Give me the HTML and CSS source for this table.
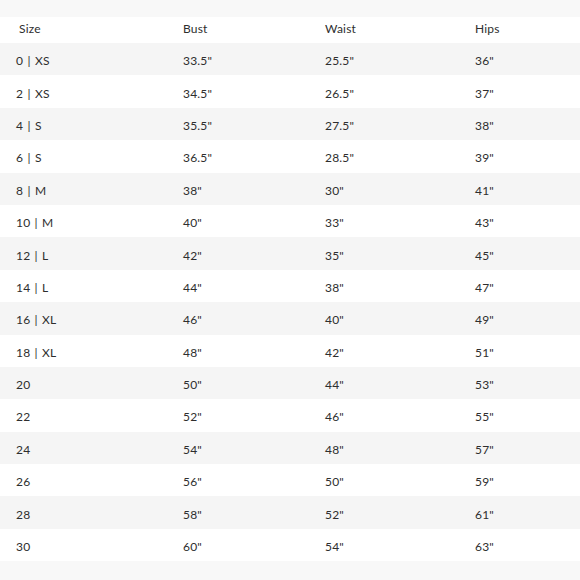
FILE: index.html
```html
<!DOCTYPE html>
<html>
<head>
<meta charset="utf-8">
<link rel="stylesheet" href="styles.css">
</head>
<body>
<div class="chart">
  <div class="band"></div>
  <div class="row head"><span class="first">Size</span><span>Bust</span><span>Waist</span><span>Hips</span></div>
  <div class="row alt"><span>0 | XS</span><span>33.5"</span><span>25.5"</span><span>36"</span></div>
  <div class="row"><span>2 | XS</span><span>34.5"</span><span>26.5"</span><span>37"</span></div>
  <div class="row alt"><span>4 | S</span><span>35.5"</span><span>27.5"</span><span>38"</span></div>
  <div class="row"><span>6 | S</span><span>36.5"</span><span>28.5"</span><span>39"</span></div>
  <div class="row alt"><span>8 | M</span><span>38"</span><span>30"</span><span>41"</span></div>
  <div class="row"><span>10 | M</span><span>40"</span><span>33"</span><span>43"</span></div>
  <div class="row alt"><span>12 | L</span><span>42"</span><span>35"</span><span>45"</span></div>
  <div class="row"><span>14 | L</span><span>44"</span><span>38"</span><span>47"</span></div>
  <div class="row alt"><span>16 | XL</span><span>46"</span><span>40"</span><span>49"</span></div>
  <div class="row"><span>18 | XL</span><span>48"</span><span>42"</span><span>51"</span></div>
  <div class="row alt"><span>20</span><span>50"</span><span>44"</span><span>53"</span></div>
  <div class="row"><span>22</span><span>52"</span><span>46"</span><span>55"</span></div>
  <div class="row alt"><span>24</span><span>54"</span><span>48"</span><span>57"</span></div>
  <div class="row"><span>26</span><span>56"</span><span>50"</span><span>59"</span></div>
  <div class="row alt"><span>28</span><span>58"</span><span>52"</span><span>61"</span></div>
  <div class="row"><span>30</span><span>60"</span><span>54"</span><span>63"</span></div>
  <div class="band bottom"></div>
</div>
</body>
</html>
```
FILE: styles.css
```css
html, body {
  margin: 0;
  padding: 0;
  background: #f8f8f8;
}
.chart {
  width: 580px;
  height: 580px;
  display: flex;
  flex-direction: column;
  font-family: Lato, "Liberation Sans", sans-serif;
  font-size: 12px;
  color: #2e2e2e;
  letter-spacing: 0.2px;
  word-spacing: 1px;
}
.band {
  height: 17px;
  background: #f8f8f8;
}
.band.bottom {
  flex: 1;
}
.row {
  display: grid;
  grid-template-columns: 167px 142px 150px 1fr;
  align-items: center;
  padding-left: 16px;
  height: 32.4px;
  background: #ffffff;
  padding-top: 3px;
  box-sizing: border-box;
}
.row.alt {
  background: #f5f5f5;
}
.row.head {
  height: 26px;
  padding-top: 0;
  padding-bottom: 4px;
}
.first {
  padding-left: 3px;
}
```
